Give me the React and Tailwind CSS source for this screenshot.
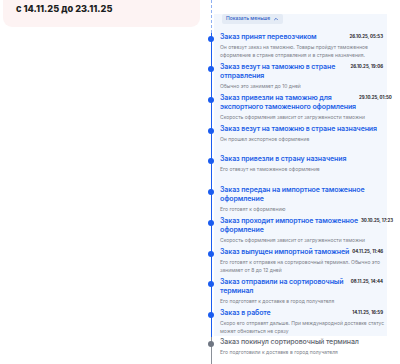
import { ChevronUp } from 'lucide-react'

const events = [
  {
    title: ['Заказ принят перевозчиком'],
    date: '26.10.25, 05:53',
    text: ['Он отвезут заказ на таможню. Товары пройдут таможенное', 'оформление в стране отправления и в стране назначения.'],
  },
  {
    title: ['Заказ везут на таможню в стране', 'отправления'],
    date: '26.10.25, 19:06',
    text: ['Обычно это занимает до 10 дней'],
  },
  {
    title: ['Заказ привезли на таможню для', 'экспортного таможенного оформления'],
    date: '29.10.25, 01:50',
    text: ['Скорость оформления зависит от загруженности таможни'],
  },
  {
    title: ['Заказ везут на таможню в стране назначения'],
    text: ['Он прошел экспортное оформление'],
    extra: 'pb-[8px]',
  },
  {
    title: ['Заказ привезли в страну назначения'],
    text: ['Его отвезут на таможенное оформление'],
    extra: 'pb-[9px]',
  },
  {
    title: ['Заказ передан на импортное таможенное', 'оформление'],
    text: ['Его готовят к оформлению'],
  },
  {
    title: ['Заказ проходит импортное таможенное', 'оформление'],
    date: '30.10.25, 17:23',
    text: ['Скорость оформления зависит от загруженности таможни'],
  },
  {
    title: ['Заказ выпущен импортной таможней'],
    date: '04.11.25, 11:46',
    text: ['Его готовят к отправке на сортировочный терминал. Обычно это', 'занимает от 8 до 12 дней'],
  },
  {
    title: ['Заказ отправили на сортировочный', 'терминал'],
    date: '08.11.25, 14:44',
    text: ['Его подготовят к доставке в город получателя'],
  },
  {
    title: ['Заказ в работе'],
    date: '14.11.25, 16:59',
    text: ['Скоро его отправят дальше. При международной доставке статус', 'может обновиться не сразу'],
  },
]

function Event({ item, muted }) {
  return (
    <div className={`relative pl-[6px] pr-[3px] ${muted ? 'pt-[1px]' : 'pt-[3px]'} ${item.extra || 'pb-[0px]'}`}>
      <span
        className={`absolute left-[-6px] w-[6px] h-[6px] rounded-full ${
          muted ? 'top-[5px] bg-[#6f7682]' : 'top-[7px] bg-[#1a5cf0]'
        }`}
      />
      <div className="flex items-start justify-between gap-[3px]">
        <div
          className={`text-[7px] leading-[9px] tracking-[-0.1px] whitespace-nowrap ${
            muted ? 'text-[#60666f] font-medium' : 'text-[#1d5fe6] font-semibold'
          }`}
        >
          {item.title.map((l) => (
            <div key={l}>{l}</div>
          ))}
        </div>
        {item.date && (
          <div className="shrink-0 text-[4.4px] leading-[9px] font-bold text-[#1f2329] whitespace-nowrap">
            {item.date}
          </div>
        )}
      </div>
      <div className="mt-[2px] text-[5px] leading-[8px] text-[#7b8089] whitespace-nowrap">
        {item.text.map((l) => (
          <div key={l}>{l}</div>
        ))}
      </div>
    </div>
  )
}

export default function App() {
  return (
    <div
      className="w-[400px] h-[364px] overflow-hidden bg-white flex"
      style={{ fontFamily: 'Inter, "Noto Sans", sans-serif' }}
    >
      {/* Left column */}
      <div className="w-[208px] shrink-0 pl-[3px] pr-[8px]">
        <div className="h-[27px] rounded-b-[9px] bg-[#fdf3f3] pl-[13px] pt-[3px]">
          <div className="text-[9.2px] leading-[12px] font-extrabold text-[#1b1d21]">с 14.11.25 до 23.11.25</div>
        </div>
      </div>

      {/* Timeline */}
      <div className="relative w-[179px] shrink-0">
        <div className="absolute left-[2.5px] top-0 h-[33px] border-l border-dashed border-[#8fb0f2]" />
        <div className="absolute left-[2.5px] top-[33px] h-[304px] w-px bg-[#1a5cf0]" />
        <div className="absolute left-[2.5px] top-[337px] bottom-0 w-px bg-[#8a9099]" />

        <div className="ml-[6px] mt-[14px] bg-[#f3f7fd] pr-[1px] pb-[1px]">
          <div className="pl-[8px]">
            <button className="h-[10px] px-[4px] flex items-center gap-[3px] bg-[#e4ebf5] rounded-[2px] text-[5px] font-medium text-[#2c5cc5]">
              Показать меньше
              <ChevronUp size={6} strokeWidth={3} />
            </button>
          </div>
          <div className="pt-[4.5px]">
            {events.map((e) => (
              <Event key={e.title[0]} item={e} />
            ))}
          </div>
        </div>
        <div className="ml-[6px]">
          <Event
            muted
            item={{
              title: ['Заказ покинул сортировочный терминал'],
              text: ['Его подготовили к доставке в город получателя'],
            }}
          />
        </div>
      </div>
    </div>
  )
}
